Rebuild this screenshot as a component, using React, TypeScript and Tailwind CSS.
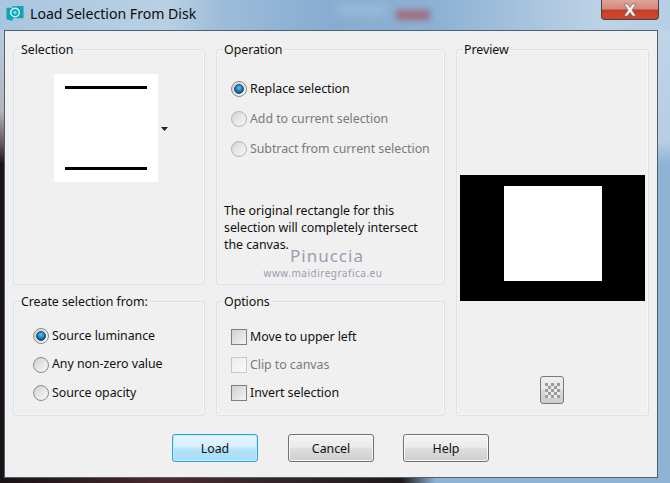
import React from "react";

const font = { fontFamily: '"Noto Sans", sans-serif' };
const txt = "text-[12.4px] tracking-[-0.05px]";

function Group({ title, className, children }: { title: string; className?: string; children?: React.ReactNode }) {
  return (
    <div className={"relative rounded-[3px] border border-[#d8e2ea] shadow-[inset_0_0_0_1px_#f6f6f6] " + (className ?? "")}>
      <span className="absolute left-[6px] top-[-8px] bg-[#f0f0f0] px-[1px] text-[12.4px] leading-[16px] tracking-[-0.05px] text-[#111]">{title}</span>
      {children}
    </div>
  );
}

function Radio({ label, checked, disabled }: { label: string; checked?: boolean; disabled?: boolean }) {
  return (
    <div className={"flex h-[16px] items-center gap-[3px] " + txt + " " + (disabled ? "text-[#7a7a7a]" : "text-[#111]")}>
      <span className={"flex h-[16px] w-[16px] items-center justify-center rounded-full border " + (disabled ? "border-[#b4b4b4] bg-gradient-to-br from-[#d6d6d6] to-[#f8f8f8]" : "border-[#8c8c8c] bg-gradient-to-br from-[#cfcfcf] to-[#fbfbfb]")}>
        {checked && <span className="h-[10px] w-[10px] rounded-full border border-[#0f4a72] bg-[radial-gradient(circle_at_50%_35%,#5cc4ee,#0a5f96_70%)]" />}
      </span>
      <span className="whitespace-nowrap">{label}</span>
    </div>
  );
}

function Check({ label, disabled }: { label: string; disabled?: boolean }) {
  return (
    <div className={"flex h-[16px] items-center gap-[3px] " + txt + " " + (disabled ? "text-[#7a7a7a]" : "text-[#111]")}>
      <span className={"h-[16px] w-[16px] border bg-gradient-to-br " + (disabled ? "border-[#c8c8c8] from-[#ececec] to-[#fafafa]" : "border-[#7e7e7e] from-[#d0d0d0] to-[#f4f4f4]")} />
      <span className="whitespace-nowrap">{label}</span>
    </div>
  );
}

function Btn({ label, primary, className }: { label: string; primary?: boolean; className?: string }) {
  return (
    <button className={"h-[28px] w-[86px] rounded-[3px] border pt-[2px] leading-none text-[#111] " + txt + " " + (primary ? "border-[#2ea3d6] bg-[linear-gradient(#e6f6fd_0%,#d6effb_45%,#b4e2f9_55%,#a8dcf7_100%)] shadow-[inset_0_0_0_1px_#bdeafc]" : "border-[#707070] bg-[linear-gradient(#f3f3f3_0%,#ebebeb_45%,#dcdcdc_55%,#cfcfcf_100%)] shadow-[inset_0_0_0_1px_#f8f8f8]") + " " + (className ?? "")}>
      {label}
    </button>
  );
}

const checks: [number, number][] = [];
for (let r = 0; r < 5; r++) for (let c = 0; c < 5; c++) if ((r + c) % 2 === 0) checks.push([c, r]);

export default function App() {
  return (
    <div style={font} className="relative flex h-[483px] w-[670px] flex-col overflow-hidden bg-[#8fb3d4]">
      <div className="relative flex h-[30px] shrink-0 bg-[linear-gradient(90deg,#a8c6df_0%,#b9d0e3_25%,#9dbcd9_33%,#86acd0_50%,#8db1d3_65%,#a6c2dc_78%,#bdd3e6_90%,#b7cfe4_100%)]">
        <svg viewBox="0 0 20 20" className="ml-[5px] mt-[4px] h-[19px] w-[20px]">
          <path d="M1 4 L7 4 L8 2 L19 2 L19 15 L8 15 L7 18 L1 16 Z" fill="#12a3b5" />
          <circle cx="10" cy="9" r="4.5" fill="none" stroke="#d5f3f6" strokeWidth="1.5" />
          <circle cx="10" cy="9" r="1.8" fill="#7ddbe4" />
        </svg>
        <span className="ml-[5px] mt-[3px] whitespace-nowrap text-[14.1px] leading-[22px] text-[#0c0c0c]">Load Selection From Disk</span>
        <div className="absolute left-[396px] top-[10px] h-[10px] w-[34px] bg-[#a8505a] opacity-70 blur-[3px]" />
        <div className="absolute left-[336px] top-[4px] h-[12px] w-[50px] bg-[#a9c4dc] opacity-50 blur-[4px]" />
        <div className="absolute left-[601px] top-0 flex h-[20px] w-[58px] items-center justify-center rounded-b-[4px] border border-t-0 border-[#5a3a38] bg-[linear-gradient(#e0a49a_0%,#d08a80_45%,#c23f28_55%,#d2452c_85%,#b84a38_100%)]">
          <svg viewBox="0 0 16 14" className="h-[14px] w-[16px]">
            <path d="M2 1 L5.5 1 L8 4.5 L10.5 1 L14 1 L10 7 L14 13 L10.5 13 L8 9.5 L5.5 13 L2 13 L6 7 Z" fill="#f4f4f4" stroke="#6b5550" strokeWidth="0.6" />
          </svg>
        </div>
      </div>
      <div className="flex min-h-0 flex-1">
        <div className="w-[4px] shrink-0 bg-[linear-gradient(#b5cde0_0%,#b5b4bc_18%,#6d5a60_25%,#1a1216_30%,#1a1216_100%)]" />
        <div className="h-[448px] w-[654px] shrink-0 border border-[#4f5f6e] bg-[#f0f0f0] px-[8px] pt-[18px]">
          <div className="grid grid-cols-[192px_229px_193px] grid-rows-[236px_115px] gap-x-[11px] gap-y-[16px]">
            <Group title="Selection" className="flex items-start pl-[40px] pt-[24px]">
              <div className="flex h-[108px] w-[104px] flex-col justify-between bg-white px-[11px] py-[12px]">
                <div className="h-[3px] bg-black" />
                <div className="h-[3px] bg-black" />
              </div>
              <svg viewBox="0 0 7 4" className="ml-[3px] mt-[53px] h-[4px] w-[7px]"><path d="M0 0H7L3.5 4Z" fill="#222" /></svg>
            </Group>
            <Group title="Operation" className="flex flex-col pl-[14px] pt-[31px]">
              <div className="flex flex-col gap-[14px]">
                <Radio label="Replace selection" checked />
                <Radio label="Add to current selection" disabled />
                <Radio label="Subtract from current selection" disabled />
              </div>
              <div className={"-ml-[7px] mt-[45px] flex flex-col items-start leading-[17px] text-[#111] " + txt}>
                <span>The original rectangle for this</span>
                <span>selection will completely intersect</span>
                <span>the canvas.</span>
              </div>
            </Group>
            <Group title="Preview" className="row-span-2 flex flex-col items-center pt-[125px]">
              <div className="flex h-[126px] w-[185px] items-start justify-center bg-black pt-[11px]">
                <div className="h-[95px] w-[98px] bg-white" />
              </div>
              <button className="-ml-[1px] mt-[75px] flex h-[28px] w-[24px] items-center justify-center rounded-[3px] border border-[#7a7a7a] bg-[linear-gradient(#efefef_0%,#e8e8e8_45%,#d6d6d6_55%,#cccccc_100%)]">
                <svg viewBox="0 0 5 5" className="h-[15px] w-[15px]" shapeRendering="crispEdges">
                  <rect width="5" height="5" fill="#e8e8e8" />
                  {checks.map(([x, y]) => <rect key={x + "-" + y} x={x} y={y} width="1" height="1" fill="#9c9c9c" />)}
                </svg>
              </button>
            </Group>
            <Group title="Create selection from:" className="flex flex-col gap-[12.5px] pl-[19px] pt-[26px]">
              <Radio label="Source luminance" checked />
              <Radio label="Any non-zero value" />
              <Radio label="Source opacity" />
            </Group>
            <Group title="Options" className="flex flex-col gap-[12px] pl-[14px] pt-[27px]">
              <Check label="Move to upper left" />
              <Check label="Clip to canvas" disabled />
              <Check label="Invert selection" />
            </Group>
          </div>
          <div className="mt-[18px] flex gap-[30px] pl-[159px]">
            <Btn label="Load" primary />
            <Btn label="Cancel" />
            <Btn label="Help" className="-ml-[1px]" />
          </div>
        </div>
        <div className="flex-1 bg-[linear-gradient(#bfd4e7_0%,#b6cde2_25%,#8fb3d4_30%,#8fb3d4_100%)]" />
      </div>
      <div className="h-[5px] shrink-0 bg-[linear-gradient(90deg,#1a1216_0%,#4a2a30_25%,#35262a_40%,#1f1a1c_60%,#8fb3d4_65%,#8fb3d4_100%)]" />
      <div className="absolute left-[262px] top-[246px] flex w-[122px] flex-col items-center text-[#9c9cb0]">
        <span className="pl-[8px] text-[17px] leading-[20px] tracking-[1px]">Pinuccia</span>
        <span className="mt-[1px] text-[10px] leading-[12px] tracking-[0.5px]">www.maidiregrafica.eu</span>
      </div>
    </div>
  );
}
